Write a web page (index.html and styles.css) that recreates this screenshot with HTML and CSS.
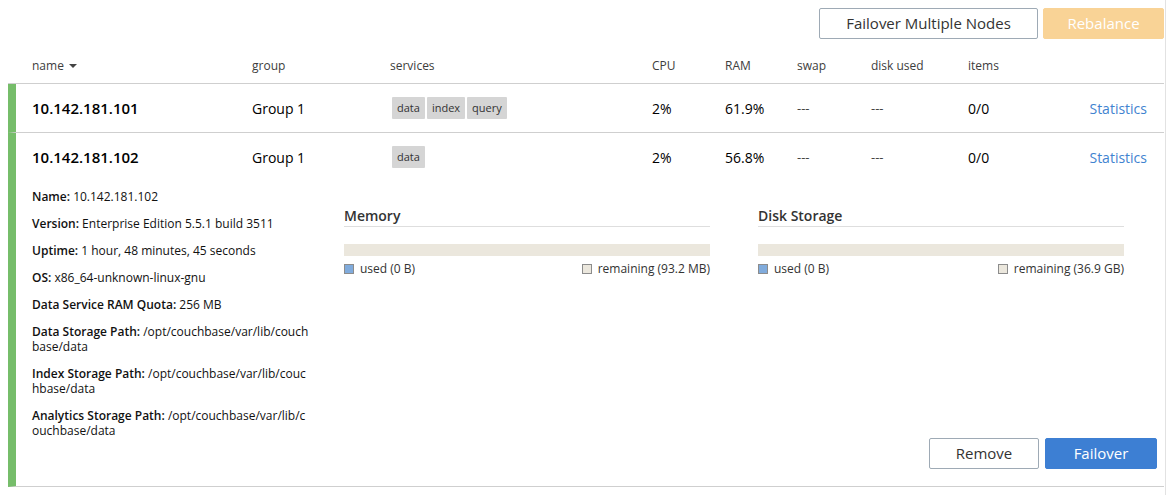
FILE: index.html
```html
<!DOCTYPE html>
<html>
<head>
<meta charset="utf-8">
<link rel="stylesheet" href="styles.css">
</head>
<body>
<div class="page">
  <div class="topbar">
    <button class="btn btn-outline btn-top">Failover Multiple Nodes</button>
    <button class="btn btn-orange btn-top">Rebalance</button>
  </div>
  <div class="thead">
    <div class="grid">
      <div class="th">name <span class="caret"></span></div>
      <div class="th">group</div>
      <div class="th">services</div>
      <div class="th">CPU</div>
      <div class="th">RAM</div>
      <div class="th">swap</div>
      <div class="th">disk used</div>
      <div class="th">items</div>
      <div class="th"></div>
    </div>
  </div>

  <div class="node">
    <div class="grid row">
      <div class="ip">10.142.181.101</div>
      <div class="cell">Group 1</div>
      <div class="chips"><span class="chip">data</span><span class="chip">index</span><span class="chip">query</span></div>
      <div class="cell">2%</div>
      <div class="cell">61.9%</div>
      <div class="cell dash">---</div>
      <div class="cell dash">---</div>
      <div class="cell">0/0</div>
      <div class="cell stat"><a href="#">Statistics</a></div>
    </div>
  </div>

  <div class="node node-open">
    <div class="grid row">
      <div class="ip">10.142.181.102</div>
      <div class="cell">Group 1</div>
      <div class="chips"><span class="chip">data</span></div>
      <div class="cell">2%</div>
      <div class="cell">56.8%</div>
      <div class="cell dash">---</div>
      <div class="cell dash">---</div>
      <div class="cell">0/0</div>
      <div class="cell stat"><a href="#">Statistics</a></div>
    </div>
    <div class="details">
      <div class="info">
        <p><b>Name:</b> 10.142.181.102</p>
        <p><b>Version:</b> Enterprise Edition 5.5.1 build 3511</p>
        <p><b>Uptime:</b> 1 hour, 48 minutes, 45 seconds</p>
        <p><b>OS:</b> x86_64-unknown-linux-gnu</p>
        <p><b>Data Service RAM Quota:</b> 256 MB</p>
        <p><b>Data Storage Path:</b> /opt/couchbase/var/lib/couchbase/data</p>
        <p><b>Index Storage Path:</b> /opt/couchbase/var/lib/couchbase/data</p>
        <p><b>Analytics Storage Path:</b> /opt/couchbase/var/lib/couchbase/data</p>
      </div>
      <div class="usage">
        <h4>Memory</h4>
        <div class="bar"></div>
        <div class="legend">
          <span class="lg"><i class="sw sw-used"></i>used (0 B)</span>
          <span class="lg"><i class="sw sw-rem"></i>remaining (93.2 MB)</span>
        </div>
      </div>
      <div class="usage">
        <h4>Disk Storage</h4>
        <div class="bar"></div>
        <div class="legend">
          <span class="lg"><i class="sw sw-used"></i>used (0 B)</span>
          <span class="lg"><i class="sw sw-rem"></i>remaining (36.9 GB)</span>
        </div>
      </div>
    </div>
    <div class="actions">
      <button class="btn btn-outline btn-act">Remove</button>
      <button class="btn btn-blue btn-act btn-fail">Failover</button>
    </div>
  </div>
</div>
</body>
</html>
```

FILE: styles.css
```css
* { box-sizing: border-box; }
html, body { margin: 0; padding: 0; background: #fff; }
body {
  font-family: "Open Sans", "Noto Sans", sans-serif;
  color: #000;
  font-size: 13px;
}
.page {
  width: 1166px;
  min-height: 495px;
  padding-left: 8px;
  border-right: 1px solid #e2e2e2;
}
.topbar {
  display: flex;
  justify-content: flex-end;
  gap: 5px;
  padding-top: 8px;
  height: 39px;
  padding-right: 1px;
}
.btn {
  font-family: "Open Sans", "Noto Sans", sans-serif;
  border-radius: 2px;
  cursor: pointer;
  padding: 0;
  line-height: 1;
}
.btn-top { height: 31px; font-size: 15px; }
.btn-outline {
  background: #fff;
  border: 1px solid #9eaab5;
  color: #333;
}
.topbar .btn-outline { width: 219px; }
.btn-orange {
  width: 121px;
  background: #f9d396;
  border: 1px solid #f9d396;
  color: #fff;
}
.grid {
  display: grid;
  grid-template-columns: 220px 138px 262px 73px 72px 74px 97px 100px 1fr;
  align-items: center;
  padding-left: 16px;
  padding-right: 17px;
}
.thead {
  border-bottom: 1px solid #cfcfcf;
  padding-left: 8px;
  margin-right: 1px;
}
.thead .grid {
  padding-top: 19px;
  padding-bottom: 9px;
}
.th {
  font-size: 12px;
  line-height: 16px;
  color: #3d3d3d;
  height: 16px;
}
.caret {
  display: inline-block;
  width: 0; height: 0;
  border-left: 4px solid transparent;
  border-right: 4px solid transparent;
  border-top: 4px solid #444;
  vertical-align: middle;
  margin-left: 2px;
  margin-top: -2px;
}
.node {
  border-left: 8px solid #76bd6a;
  border-bottom: 1px solid #cfcfcf;
  margin-right: 1px;
}
.row { height: 48px; }
.ip { font-weight: 600; font-size: 15px; }
.cell { font-size: 14px; }
.dash { color: #444; font-size: 13px; }
.stat { text-align: right; }
.stat a { color: #3f83d0; text-decoration: none; }
.chips { display: flex; gap: 2px; padding-left: 2px; }
.chip {
  background: #d5d5d5;
  color: #333;
  font-size: 11px;
  height: 22px;
  line-height: 22px;
  padding: 0 5px;
  border-radius: 1px;
}
.details {
  display: flex;
  align-items: flex-start;
  padding: 8px 0 0 16px;
}
.info { width: 280px; margin-right: 32px; flex-shrink: 0; }
.info p {
  margin: 0 0 12px;
  font-size: 12px;
  line-height: 15px;
  word-break: break-all;
  color: #111;
}
.info b { font-weight: 600; }
.usage { width: 366px; flex-shrink: 0; padding-top: 18px; }
.usage + .usage { margin-left: 48px; }
.usage h4 {
  margin: 0;
  font-size: 14px;
  font-weight: 600;
  color: #333;
  line-height: 18px;
  padding-bottom: 1px;
  border-bottom: 1px solid #dedede;
}
.bar {
  margin-top: 17px;
  height: 12px;
  background: #ebe7dd;
}
.legend {
  display: flex;
  justify-content: space-between;
  margin-top: 6px;
  font-size: 12px;
  line-height: 14px;
  color: #333;
}
.lg { display: flex; align-items: center; }
.sw {
  display: inline-block;
  width: 10px; height: 10px;
  border: 1px solid #8c8c8c;
  margin-right: 6px;
}
.sw-used { background: #80abdc; }
.sw-rem { background: #ebe7dd; }
.actions {
  display: flex;
  justify-content: flex-end;
  gap: 6px;
  padding-right: 7px;
  padding-bottom: 17px;
  margin-top: -12px;
}
.btn-act { height: 31px; font-size: 15px; width: 110px; }
.btn-blue {
  background: #3d7fd3;
  border: 1px solid #3d7fd3;
  color: #fff;
}
.btn-fail { width: 112px; }
```
